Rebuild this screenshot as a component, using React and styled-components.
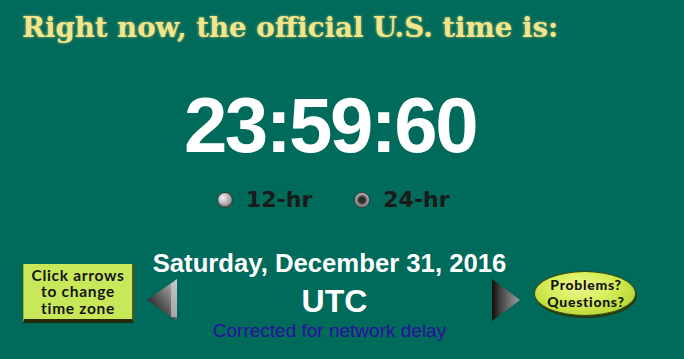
import styled, { createGlobalStyle } from "styled-components";

const Global = createGlobalStyle`
    html, body {
        margin: 0;
        padding: 0;
        background: #006a5b;
    }
`

export default function App() {
    return (
        <Page>
            <Global />
            <Title>Right now, the official U.S. time is:</Title>

            <Clock>23:59:60</Clock>

            <Modes>
                <Mode>
                    <Radio />
                    <span>12-hr</span>
                </Mode>
                <Mode>
                    <Radio checked />
                    <span>24-hr</span>
                </Mode>
            </Modes>

            <Bottom>
                <HintBox>
                    <Line>Click arrows</Line>
                    <Line>to change</Line>
                    <Line>time zone</Line>
                </HintBox>

                <Center>
                    <DateLine>Saturday, December 31, 2016</DateLine>
                    <ZoneRow>
                        <Arrow width="30" height="42" viewBox="0 0 30 42">
                            <defs>
                                <linearGradient id="gl" x1="0" y1="1" x2="1" y2="0">
                                    <stop offset="0" stopColor="#000" />
                                    <stop offset="0.45" stopColor="#555" />
                                    <stop offset="0.8" stopColor="#9a9a9a" />
                                    <stop offset="1" stopColor="#d8d8d8" />
                                </linearGradient>
                            </defs>
                            <polygon points="0,21 30,0 30,42" fill="url(#gl)" />
                            <rect x="24" y="4" width="6" height="34" fill="#c8c8c8" opacity="0.7" />
                        </Arrow>
                        <Zone>
                            <ZoneName>UTC</ZoneName>
                            <Note>Corrected for network delay</Note>
                        </Zone>
                        <Arrow width="28" height="42" viewBox="0 0 28 42">
                            <defs>
                                <linearGradient id="gr" x1="0" y1="0" x2="1" y2="0">
                                    <stop offset="0" stopColor="#0a0a0a" />
                                    <stop offset="0.25" stopColor="#3a3a3a" />
                                    <stop offset="0.7" stopColor="#7a7a7a" />
                                    <stop offset="1" stopColor="#a0a0a0" />
                                </linearGradient>
                            </defs>
                            <polygon points="0,0 28,21 0,42" fill="url(#gr)" />
                        </Arrow>
                    </ZoneRow>
                </Center>

                <HelpOval>
                    <Line>Problems?</Line>
                    <Line>Questions?</Line>
                </HelpOval>
            </Bottom>
        </Page>
    )
}

const Page = styled.div`
    width: 684px;
    height: 359px;
    background: #006a5b;
    overflow: hidden;
    display: flex;
    flex-direction: column;
`

const Title = styled.h1`
    margin: 14px 0 0 22px;
    font-family: "DejaVu Serif", serif;
    font-size: 27.6px;
    line-height: 27.6px;
    font-weight: bold;
    color: #f3e58c;
    text-shadow: 0 0 3px rgba(240, 220, 110, 0.7);
    white-space: nowrap;
`

const Clock = styled.div`
    margin-top: 44.4px;
    padding-right: 24px;
    text-align: center;
    font-family: "Liberation Sans", Arial, sans-serif;
    font-weight: bold;
    font-size: 78px;
    line-height: 78px;
    letter-spacing: -2.5px;
    color: #fff;
`

const Modes = styled.div`
    margin-top: 25px;
    margin-left: 217px;
    display: flex;
    gap: 42px;
    height: 22px;
`

const Mode = styled.label`
    display: flex;
    align-items: center;
    gap: 13px;
    font-family: "DejaVu Sans", sans-serif;
    font-weight: bold;
    font-size: 22px;
    line-height: 22px;
    color: #1a1a1a;
`

const Radio = styled.span`
    width: 16px;
    height: 16px;
    border-radius: 50%;
    box-sizing: border-box;
    border: 1px solid #3a3a3a;
    background: ${p => p.checked
        ? "radial-gradient(circle at 50% 50%, #2c2c2c 0 3px, #5a5a5a 4px, #cfcfcf 7px)"
        : "radial-gradient(circle at 35% 35%, #f2f2f2 0, #b5b5b5 45%, #6a6a6a 100%)"};
    box-shadow: inset 0 -1px 1px rgba(0, 0, 0, 0.4);
`

const Bottom = styled.div`
    display: flex;
    align-items: flex-start;
    margin-top: 40px;
    padding-left: 23px;
`

const Line = styled.div`
    white-space: nowrap;
`

const HintBox = styled.div`
    margin-top: 13px;
    width: 111px;
    height: 59px;
    box-sizing: border-box;
    background: #c8e85a;
    border-left: 1px solid #9fb83a;
    border-right: 2px solid #4b5a14;
    border-bottom: 4px solid #262a08;
    font-family: Lato, sans-serif;
    font-weight: bold;
    font-size: 15.5px;
    line-height: 16.5px;
    letter-spacing: 0.7px;
    color: #151515;
    text-align: center;
    padding-top: 3px;
`

const Center = styled.div`
    margin-left: 13px;
    width: 373px;
    display: flex;
    flex-direction: column;
    align-items: center;
`

const DateLine = styled.div`
    font-family: "Liberation Sans", Arial, sans-serif;
    font-weight: bold;
    font-size: 25.7px;
    line-height: 25px;
    color: #fff;
    white-space: nowrap;
    margin-right: 8px;
`

const ZoneRow = styled.div`
    margin-top: 3px;
    width: 100%;
    display: flex;
    justify-content: space-between;
    align-items: flex-start;
`

const Arrow = styled.svg`
    display: block;
    flex-shrink: 0;
`

const Zone = styled.div`
    padding-top: 6px;
    display: flex;
    flex-direction: column;
    align-items: center;
    gap: 4px;
`

const ZoneName = styled.div`
    font-family: "Liberation Sans", Arial, sans-serif;
    font-weight: bold;
    font-size: 32px;
    line-height: 32px;
    color: #fff;
`

const Note = styled.div`
    font-family: "Liberation Sans", Arial, sans-serif;
    font-size: 19px;
    line-height: 19px;
    color: #2d0f9e;
    white-space: nowrap;
    margin-right: 10px;
`

const HelpOval = styled.div`
    margin-top: 20px;
    margin-left: 14px;
    width: 102px;
    height: 45px;
    box-sizing: border-box;
    border-radius: 50%;
    border: 1.5px solid #3d4d0e;
    background: radial-gradient(ellipse at 45% 35%, #eef890 0, #d6ee58 40%, #b6d334 80%, #86a218 100%);
    box-shadow: 1px 2px 0 #2c3a0a;
    display: flex;
    flex-direction: column;
    align-items: center;
    justify-content: center;
    font-family: Lato, sans-serif;
    font-weight: 900;
    font-size: 14px;
    line-height: 17px;
    letter-spacing: 0.7px;
    color: #141414;
    text-align: center;
    padding-left: 2px;
`
